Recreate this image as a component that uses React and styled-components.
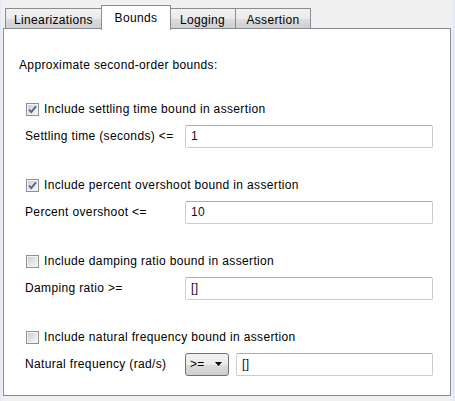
import React from "react";
import styled, { createGlobalStyle } from "styled-components";

const Global = createGlobalStyle`
  html, body { margin: 0; padding: 0; }
  body {
    font-family: Tahoma, "Liberation Sans", Arial, sans-serif;
    font-size: 12px;
    letter-spacing: 0.35px;
    color: #000;
  }
`;

const Window = styled.div`
  width: 455px;
  height: 401px;
  background: #f0f0f0;
  box-sizing: border-box;
  padding: 5px 4px 0 2px;
  border-left: 1px solid #dfe8f3;
  border-right: 2px solid #dfe8f3;
`;

const TabRow = styled.div`
  display: flex;
  align-items: flex-end;
  height: 24px;
  padding-left: 2px;
  position: relative;
  z-index: 1;
`;

const Tab = styled.div`
  box-sizing: border-box;
  height: ${(p) => (p.$active ? "25px" : "21px")};
  width: ${(p) => p.$w}px;
  margin: ${(p) => (p.$active ? "0 -1px -1px -1px" : "0")};
  border: 1px solid #898c95;
  border-bottom: ${(p) => (p.$active ? "none" : "1px solid #898c95")};
  margin-left: ${(p) => (p.$first ? "0" : "-1px")};
  background: ${(p) =>
    p.$active ? "#ffffff" : "linear-gradient(#f2f2f2, #ebebeb 50%, #dddddd 51%, #cfcfcf)"};
  display: flex;
  align-items: center;
  justify-content: center;
  padding-top: ${(p) => (p.$active ? "0" : "2px")};
  position: relative;
  z-index: ${(p) => (p.$active ? 2 : 1)};
`;

const Panel = styled.div`
  box-sizing: border-box;
  width: 448px;
  height: 368px;
  margin-top: -1px;
  background: #fff;
  border: 1px solid #898c95;
  padding: 29px 17px 0 21px;
  display: flex;
  flex-direction: column;
  gap: 26px;
`;

const Heading = styled.div`
  height: 14px;
  line-height: 14px;
  margin-left: -6px;
`;

const Group = styled.div`
  display: flex;
  flex-direction: column;
  gap: 4px;
`;

const CheckRow = styled.label`
  display: flex;
  align-items: center;
  height: 22px;
  gap: 5px;
  padding-left: 1px;
`;

const FieldRow = styled.div`
  display: flex;
  align-items: center;
  height: 24px;
`;

const FieldLabel = styled.div`
  width: 160px;
  flex: none;
`;

const TextBox = styled.div`
  box-sizing: border-box;
  height: 23px;
  flex: 1;
  border: 1px solid #c9cdd3;
  border-top-color: #abadb3;
  border-radius: 2px;
  background: #fff;
  padding: 0 5px;
  display: flex;
  align-items: center;
  color: #1a0a2a;
`;

const Combo = styled.div`
  box-sizing: border-box;
  width: 44px;
  height: 23px;
  flex: none;
  margin-right: 7px;
  border: 1px solid #707070;
  border-radius: 3px;
  background: linear-gradient(#f2f2f2, #ebebeb 50%, #dddddd 51%, #cfcfcf);
  display: flex;
  align-items: center;
  justify-content: space-between;
  padding: 0 6px 0 4px;
`;

function CheckBox({ checked }) {
  const id = checked ? "cbg1" : "cbg0";
  return (
    <svg width="13" height="13" viewBox="0 0 13 13">
      <defs>
        <linearGradient id={id} x1="0" y1="0" x2="1" y2="1">
          <stop offset="0" stopColor="#cbcfd5" />
          <stop offset="1" stopColor="#f6f6f6" />
        </linearGradient>
      </defs>
      <rect x="0.5" y="0.5" width="12" height="12" fill="#f4f4f4" stroke="#8e8f8f" />
      <rect x="2" y="2" width="9" height="9" fill={`url(#${id})`} />
      {checked && (
        <path d="M3 6.5 L5.3 9 L10 3.2" fill="none" stroke="#4a5f97" strokeWidth="1.8" />
      )}
    </svg>
  );
}

const groups = [
  { check: "Include settling time bound in assertion", label: "Settling time (seconds) <=", value: "1", checked: true },
  { check: "Include percent overshoot bound in assertion", label: "Percent overshoot <=", value: "10", checked: true },
  { check: "Include damping ratio bound in assertion", label: "Damping ratio >=", value: "[]", checked: false },
  { check: "Include natural frequency bound in assertion", label: "Natural frequency (rad/s)", value: "[]", checked: false, combo: true },
];

export default function App() {
  return (
    <>
      <Global />
      <Window>
        <TabRow>
          <Tab $w={97} $first>Linearizations</Tab>
          <Tab $w={70} $active>Bounds</Tab>
          <Tab $w={67}>Logging</Tab>
          <Tab $w={76}>Assertion</Tab>
        </TabRow>
        <Panel>
          <Heading>Approximate second-order bounds:</Heading>
          {groups.map((g) => (
            <Group key={g.check}>
              <CheckRow>
                <CheckBox checked={g.checked} />
                {g.check}
              </CheckRow>
              <FieldRow>
                <FieldLabel>{g.label}</FieldLabel>
                {g.combo && (
                  <Combo>
                    <span>&gt;=</span>
                    <svg width="7" height="4" viewBox="0 0 7 4">
                      <path d="M0 0 H7 L3.5 4 Z" fill="#000" />
                    </svg>
                  </Combo>
                )}
                <TextBox>{g.value}</TextBox>
              </FieldRow>
            </Group>
          ))}
        </Panel>
      </Window>
    </>
  );
}
